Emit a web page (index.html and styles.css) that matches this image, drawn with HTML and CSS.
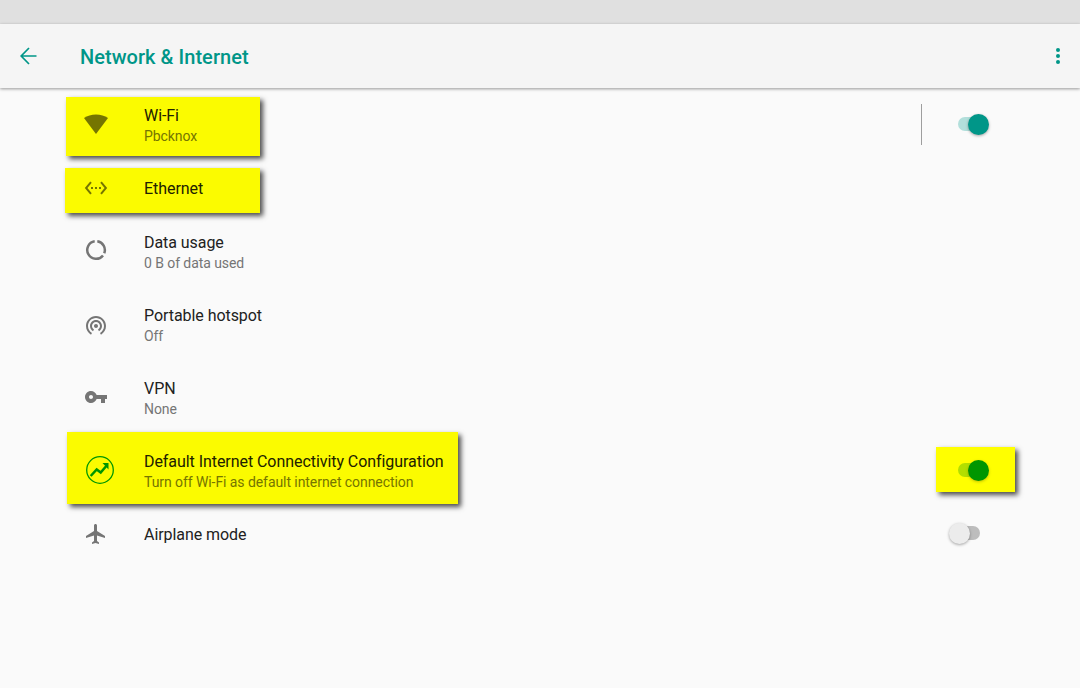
FILE: index.html
```html
<!DOCTYPE html>
<html lang="en">
<head>
<meta charset="utf-8">
<title>Network &amp; Internet</title>
<link rel="stylesheet" href="styles.css">
</head>
<body>
<div class="status-bar"></div>
<header class="toolbar">
  <svg class="back" width="24" height="24" viewBox="0 0 24 24"><path d="M6 12H20.500M13 4 5.200 12l7.800 8" fill="none" stroke="currentColor" stroke-width="1.700"/></svg>
  <h1 class="toolbar-title">Network &amp; Internet</h1>
  <svg class="more" width="8" height="20" viewBox="0 0 8 20"><circle cx="4" cy="4" r="2"/><circle cx="4" cy="10" r="2"/><circle cx="4" cy="16" r="2"/></svg>
</header>
<main class="list">
  <section class="row two on-hl">
    <div class="hl hl-wifi"></div>
    <svg class="icon" viewBox="0 0 24 24"><path d="M12 22 0 6C3.300 3.700 7.400 2.500 12 2.500S20.700 3.700 24 6Z"/></svg>
    <div class="text"><div class="title">Wi-Fi</div><div class="sub">Pbcknox</div></div>
    <div class="divider"></div>
    <div class="switch sw-wifi"><span class="thumb"></span></div>
  </section>
  <section class="row one on-hl">
    <div class="hl hl-eth"></div>
    <svg class="icon" viewBox="0 0 24 24"><path d="M7.770 6.760L6.230 5.480.82 12l5.410 6.520 1.540-1.280L3.420 12l4.350-5.240zM7 13h2v-2H7v2zm10-2h-2v2h2v-2zm-6 2h2v-2h-2v2zm6.770-7.520l-1.540 1.280L20.580 12l-4.350 5.240 1.540 1.280L23.180 12l-5.410-6.520z"/></svg>
    <div class="text"><div class="title">Ethernet</div></div>
  </section>
  <section class="row two">
    <svg class="icon icon-data" viewBox="0 0 24 24"><path d="M13.300 3.300A8.800 8.800 0 0 1 20.200 15.300M19 17.400A8.800 8.800 0 1 1 10.700 3.300" fill="none" stroke="#757575" stroke-width="2.500"/></svg>
    <div class="text"><div class="title">Data usage</div><div class="sub">0 B of data used</div></div>
  </section>
  <section class="row two">
    <svg class="icon icon-hotspot" viewBox="0 0 24 24"><path d="M12 11c-1.100 0-2 .9-2 2s.9 2 2 2 2-.9 2-2-.9-2-2-2zm6 2c0-3.310-2.690-6-6-6s-6 2.690-6 6c0 2.220 1.210 4.150 3 5.190l1-1.740c-1.190-.7-2-1.970-2-3.450 0-2.210 1.790-4 4-4s4 1.790 4 4c0 1.480-.81 2.750-2 3.450l1 1.740c1.790-1.040 3-2.970 3-5.190zM12 3C6.480 3 2 7.480 2 13c0 3.700 2.010 6.920 4.990 8.650l1-1.730C5.610 18.530 4 15.960 4 13c0-4.420 3.580-8 8-8s8 3.580 8 8c0 2.960-1.610 5.530-4 6.920l1 1.730c2.990-1.730 5-4.950 5-8.650 0-5.520-4.480-10-10-10z"/></svg>
    <div class="text"><div class="title">Portable hotspot</div><div class="sub">Off</div></div>
  </section>
  <section class="row two">
    <svg class="icon" viewBox="0 0 24 24"><path d="M12.650 10C11.830 7.670 9.610 6 7 6c-3.310 0-6 2.690-6 6s2.690 6 6 6c2.610 0 4.830-1.670 5.650-4H17v4h4v-4h2v-4H12.650zM7 14c-1.100 0-2-.9-2-2s.9-2 2-2 2 .9 2 2-.9 2-2 2z"/></svg>
    <div class="text"><div class="title">VPN</div><div class="sub">None</div></div>
  </section>
  <section class="row two on-hl">
    <div class="hl hl-default"></div>
    <div class="hl hl-switch"></div>
    <svg class="icon icon-green" viewBox="0 0 28 28"><circle cx="14" cy="14" r="13.300" fill="none" stroke="currentColor" stroke-width="1.300"/><path d="M4.700 20 10.700 13.500l4 3 5.800-6.800" fill="none" stroke="currentColor" stroke-width="2.500"/><path d="M16.500 7H22.500V13.500Z"/></svg>
    <div class="text"><div class="title">Default Internet Connectivity Configuration</div><div class="sub">Turn off Wi-Fi as default internet connection</div></div>
    <div class="switch sw-default"><span class="thumb"></span></div>
  </section>
  <section class="row one">
    <svg class="icon" viewBox="0 0 24 24"><path d="M21 16v-2l-8-5V3.500c0-.83-.67-1.500-1.500-1.500S10 2.670 10 3.500V9l-8 5v2l8-2.500V19l-2 1.500V22l3.500-1 3.500 1v-1.500L13 19v-5.500l8 2.500z"/></svg>
    <div class="text"><div class="title">Airplane mode</div></div>
    <div class="switch sw-off"><span class="thumb"></span></div>
  </section>
</main>
</body>
</html>
```
FILE: styles.css
```css
* { box-sizing: border-box; }
html, body { margin: 0; height: 100%; }
body {
  width: 1080px;
  height: 688px;
  overflow: hidden;
  background: #fafafa;
  font-family: Roboto, "Liberation Sans", sans-serif;
  color: #212121;
}
.status-bar { height: 24px; background: #e0e0e0; }
.toolbar {
  position: relative;
  z-index: 2;
  height: 64px;
  background: #f5f5f5;
  display: flex;
  align-items: center;
  padding: 0 18px 0 16px;
  color: #009688;
  box-shadow: 0 1px 3px rgba(0, 0, 0, .4);
}
.back { flex: none; }
.toolbar-title {
  margin: 2px 0 0 40px;
  font-size: 20px;
  font-weight: 500;
  letter-spacing: .05px;
  flex: 1;
}
.more { fill: currentColor; flex: none; }
.list { display: flex; flex-direction: column; }
.row {
  position: relative;
  display: flex;
  align-items: center;
  padding-left: 84px;
}
.row.two { height: 73px; }
.row.one { height: 54px; }
.icon {
  position: relative;
  width: 24px;
  height: 24px;
  flex: none;
  fill: #757575;
}
.row.two .icon { margin-bottom: 1px; }
.row.two .icon-data { margin-bottom: 3px; }
.row.two .icon-hotspot { margin: 1px 0 0; }
.text { position: relative; margin-left: 36px; }
.row.two .text { padding-top: 2px; }
.title { font-size: 16px; line-height: 21px; color: #212121; letter-spacing: -.06px; }
.sub { font-size: 14px; line-height: 21px; color: #757575; letter-spacing: -.07px; }
.on-hl .icon { fill: #757500; }
.on-hl .title { color: #212100; }
.on-hl .sub { color: #757500; }
.hl {
  position: absolute;
  background: #fbfb00;
  box-shadow: 3px 3px 5px rgba(0, 0, 0, .7);
}
.hl-wifi { left: 66px; top: 9px; width: 194px; height: 59px; }
.hl-eth { left: 65px; top: 7px; width: 195px; height: 45px; }
.hl-default { left: 67px; top: -2px; width: 391px; height: 72px; }
.hl-switch { left: 936px; top: 13px; width: 79px; height: 45px; background: #ff0; }
.row.two .icon-green {
  width: 28px;
  height: 28px;
  margin: 0 -6px 2px 2px;
  fill: #009600;
  color: #009600;
}
.divider {
  position: absolute;
  left: 921px;
  top: 16px;
  width: 1px;
  height: 41px;
  background: #9e9e9e;
}
.switch { position: absolute; width: 30px; height: 14px; border-radius: 7px; }
.thumb {
  position: absolute;
  top: -3px;
  width: 21px;
  height: 21px;
  border-radius: 50%;
  box-shadow: 0 1px 3px rgba(0, 0, 0, .35);
}
.sw-wifi { left: 958px; top: 29px; background: #b2dfdb; }
.sw-wifi .thumb { right: -1px; background: #009688; }
.sw-default { left: 958px; top: 29px; background: #b2df00; }
.sw-default .thumb { right: -1px; background: #009600; box-shadow: 0 1px 3px rgba(100, 100, 0, .4); }
.sw-off { left: 950px; top: 19px; background: #bdbdbd; }
.sw-off .thumb { left: -1px; background: #ececec; }
```
